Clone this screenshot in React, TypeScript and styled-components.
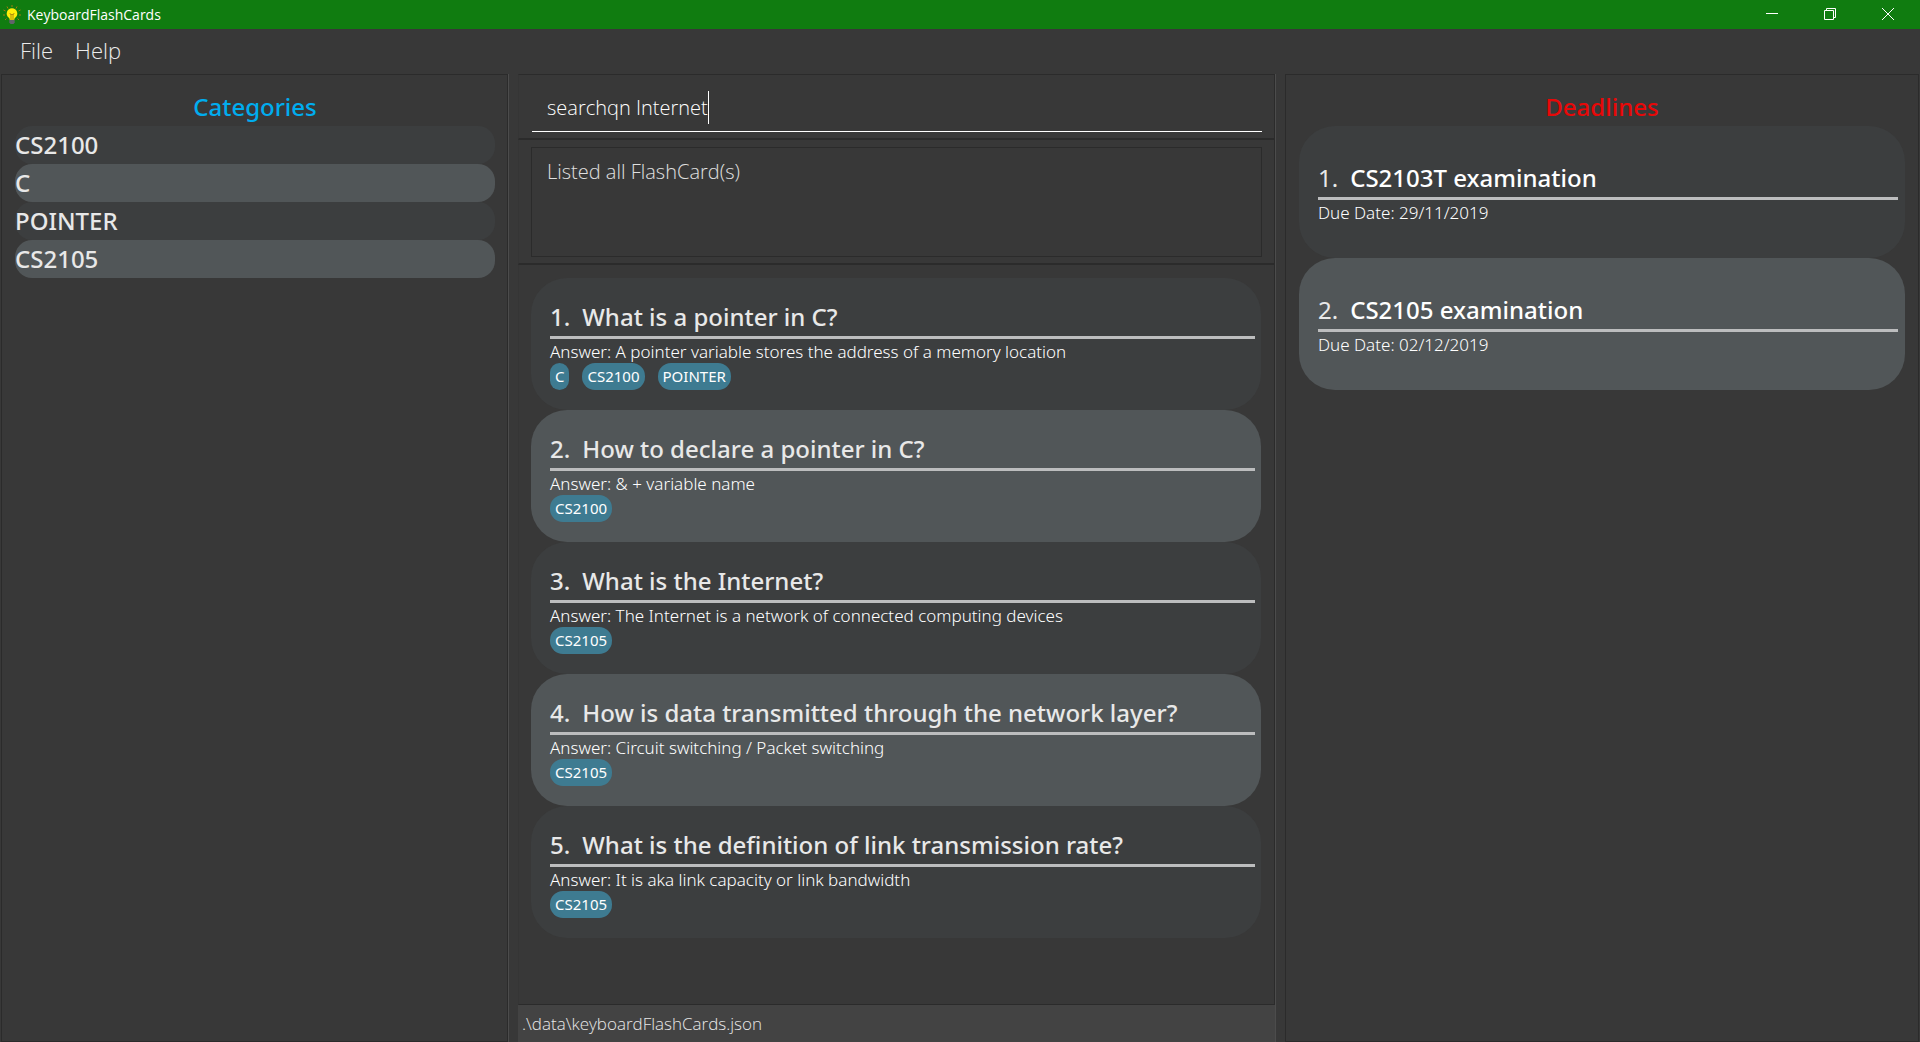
import React from "react";
import styled, { createGlobalStyle } from "styled-components";

const GlobalStyle = createGlobalStyle`
  *, *::before, *::after { box-sizing: border-box; }
  html, body, #root { height: 100%; margin: 0; }
  body {
    background: #383838;
    color: #e8e8e8;
    font-family: "Open Sans", "Noto Sans", sans-serif;
    overflow: hidden;
  }
  h1, h2, h3, p, ul, ol { margin: 0; padding: 0; font-weight: inherit; }
  ul, ol { list-style: none; }
`;

const Window = styled.div`
  display: flex;
  flex-direction: column;
  height: 100%;
`;

const TitleBar = styled.header`
  display: flex;
  flex: none;
  height: 29px;
  padding: 0 3px;
  background: #107c10;
  color: #fff;
`;

const AppName = styled.h1`
  display: flex;
  align-items: center;
  gap: 6px;
  flex: 1;
  font-size: 14px;
  line-height: 28px;
`;

const WindowButton = styled.button`
  display: grid;
  place-items: center;
  width: 58px;
  height: 28px;
  padding: 0;
  border: 0;
  background: none;
  color: #fff;
`;

const MenuBar = styled.nav`
  display: flex;
  flex: none;
  height: 45px;
  padding: 4px 9px;
`;

const MenuButton = styled.button`
  height: 34px;
  padding: 0 11px;
  border: 0;
  background: none;
  color: #ececec;
  font: 300 22px/32px "Open Sans", "Noto Sans", sans-serif;
`;

const Panes = styled.main`
  display: grid;
  grid-template-columns: minmax(0, 508fr) minmax(0, 757fr) minmax(0, 635fr);
  column-gap: 10px;
  flex: 1;
  min-height: 0;
`;

const SidePane = styled.section<{ $edge: "left" | "right" }>`
  padding: 13px;
  border: 1px solid #2b2b2b;
  ${({ $edge }) =>
    $edge === "left"
      ? "margin-left: 1px; padding-right: 12px; box-shadow: 1px 0 #4c4c4c;"
      : "margin-right: 1px;"}
`;

const PaneHeading = styled.h2<{ $color: string }>`
  color: ${({ $color }) => $color};
  font-family: "Noto Sans", "Open Sans", sans-serif;
  font-size: 24px;
  font-weight: 500;
  line-height: 38px;
  text-align: center;
`;

const Category = styled.li`
  height: 38px;
  border-radius: 17px;
  background: #3c3e3f;
  font-family: "Noto Sans", "Open Sans", sans-serif;
  font-size: 24px;
  font-weight: 500;
  line-height: 38px;

  &:nth-child(even) { background: #515658; }
`;

const CenterPane = styled.section`
  display: flex;
  flex-direction: column;
  min-height: 0;
  box-shadow: 1px 0 #4c4c4c;
`;

const Framed = styled.div`
  border-right: 1px solid #2b2b2b;
  border-left: 1px solid #353535;
`;

const CommandArea = styled(Framed)`
  padding: 11px 12px 6px 13px;
  border-top: 1px solid #2b2b2b;
  border-bottom: 2px solid #2b2b2b;
`;

const CommandField = styled.div`
  display: flex;
  align-items: center;
  height: 46px;
  padding: 0 15px 2px;
  border-bottom: 1px solid #fff;
`;

const CommandInput = styled.input`
  field-sizing: content;
  min-width: 0;
  padding: 0;
  border: 0;
  outline: 0;
  background: none;
  color: #fff;
  caret-color: transparent;
  font: 300 20px/32px "Open Sans", "Noto Sans", sans-serif;
`;

const Caret = styled.span`
  width: 1px;
  height: 33px;
  background: #fff;
`;

const ResultArea = styled(Framed)`
  padding: 7px 12px 6px;
  border-bottom: 2px solid #2b2b2b;
`;

const ResultBox = styled.output`
  display: block;
  height: 110px;
  padding: 8px 15px;
  border: 1px solid #2b2b2b;
  color: #e0e0e0;
  font-size: 20px;
  font-weight: 300;
  line-height: 32px;
`;

const CardArea = styled(Framed)`
  flex: 1;
  min-height: 0;
  padding: 13px 13px 13px 12px;
  border-bottom: 1px solid #2b2b2b;
`;

const Card = styled.li<{ $low?: boolean }>`
  height: 132px;
  padding: ${({ $low }) => ($low ? "35px 7px" : "22px 6px")} 0 19px;
  border-radius: 36px;
  background: #3c3e3f;

  &:nth-child(even) { background: #515658; }
`;

const CardTitle = styled.h3<{ $bright?: boolean }>`
  display: flex;
  gap: 12px;
  padding-bottom: 3px;
  border-bottom: 3px solid #bcbdbe;
  color: ${({ $bright }) => ($bright ? "#fff" : "#e8e8e8")};
  font-family: "Noto Sans", "Open Sans", sans-serif;
  font-size: 24px;
  font-weight: 500;
  line-height: 33px;
`;

const DeadlineNumber = styled.span`
  color: #e8e8e8;
  font-weight: 400;
`;

const CardText = styled.p`
  padding-top: 2px;
  color: #fff;
  font-family: "Noto Sans", "Open Sans", sans-serif;
  font-size: 17px;
  font-weight: 300;
  line-height: 22px;
`;

const Tags = styled.ul`
  display: flex;
  gap: 13px;
`;

const Tag = styled.li`
  padding: 0 5px;
  border-radius: 13px;
  background: #3e7b91;
  color: #fff;
  font-family: "Noto Sans", "Open Sans", sans-serif;
  font-size: 15px;
  font-weight: 400;
  line-height: 27px;
`;

const StatusBar = styled.footer`
  flex: none;
  height: 37px;
  padding: 0 4px;
  background: #434343;
  color: #e8e8e8;
  font-size: 17px;
  font-weight: 300;
  line-height: 37px;
`;

const BulbIcon = () => (
  <svg width="18" height="20" viewBox="0 0 18 20" aria-hidden="true">
    <g stroke="#a07c10" strokeWidth="1">
      <path d="M9 0v2M4 1.500l1 2M14 1.500l-1 2M.5 5l2 1M17.500 5l-2 1M0 10h2M18 10h-2M2 15l1.500-1.500M16 15l-1.500-1.500" />
    </g>
    <path d="M9 3.200a5.300 5.300 0 0 0-3.200 9.500c.7.600.9 1.300.9 2.300h4.600c0-1 .2-1.700.9-2.300A5.300 5.300 0 0 0 9 3.200z" fill="#ffee0a" />
    <path d="M6.800 8l1.200 2 1-1 1 1 1.200-2M8 10v5M10 10v5" fill="none" stroke="#a88410" strokeWidth=".9" />
    <path d="M6.300 15h5.400v2.500l-1.200 1.500h-3l-1.200-1.500z" fill="#62646a" />
  </svg>
);

const categories = ["CS2100", "C", "POINTER", "CS2105"];

const flashCards = [
  { question: "What is a pointer in C?", answer: "A pointer variable stores the address of a memory location", tags: ["C", "CS2100", "POINTER"] },
  { question: "How to declare a pointer in C?", answer: "& + variable name", tags: ["CS2100"] },
  { question: "What is the Internet?", answer: "The Internet is a network of connected computing devices", tags: ["CS2105"] },
  { question: "How is data transmitted through the network layer?", answer: "Circuit switching / Packet switching", tags: ["CS2105"] },
  { question: "What is the definition of link transmission rate?", answer: "It is aka link capacity or link bandwidth", tags: ["CS2105"] },
];

const deadlines = [
  { name: "CS2103T examination", due: "29/11/2019" },
  { name: "CS2105 examination", due: "02/12/2019" },
];

export default function App() {
  const [command, setCommand] = React.useState("searchqn Internet");

  return (
    <>
      <GlobalStyle />
      <Window>
        <TitleBar>
          <AppName>
            <BulbIcon />
            KeyboardFlashCards
          </AppName>
          <WindowButton aria-label="Minimize">
            <svg width="12" height="12" viewBox="0 0 12 12" stroke="currentColor">
              <path d="M0 5.500h12" />
            </svg>
          </WindowButton>
          <WindowButton aria-label="Restore">
            <svg width="12" height="12" viewBox="0 0 12 12" fill="none" stroke="currentColor">
              <path d="M.5 2.500h9v9h-9zM2.500 2.500v-2h9v9h-2" />
            </svg>
          </WindowButton>
          <WindowButton aria-label="Close">
            <svg width="12" height="12" viewBox="0 0 12 12" stroke="currentColor">
              <path d="M0 0l12 12M12 0L0 12" />
            </svg>
          </WindowButton>
        </TitleBar>
        <MenuBar>
          <MenuButton>File</MenuButton>
          <MenuButton>Help</MenuButton>
        </MenuBar>
        <Panes>
          <SidePane $edge="left">
            <PaneHeading $color="#00adef">Categories</PaneHeading>
            <ul>
              {categories.map((name) => (
                <Category key={name}>{name}</Category>
              ))}
            </ul>
          </SidePane>
          <CenterPane>
            <CommandArea>
              <CommandField>
                <CommandInput
                  aria-label="Command"
                  value={command}
                  onChange={(event) => setCommand(event.target.value)}
                />
                <Caret />
              </CommandField>
            </CommandArea>
            <ResultArea>
              <ResultBox>Listed all FlashCard(s)</ResultBox>
            </ResultArea>
            <CardArea>
              <ol>
                {flashCards.map((card, index) => (
                  <Card key={card.question}>
                    <CardTitle>
                      <span>{index + 1}.</span>
                      <span>{card.question}</span>
                    </CardTitle>
                    <CardText>Answer: {card.answer}</CardText>
                    <Tags>
                      {card.tags.map((tag) => (
                        <Tag key={tag}>{tag}</Tag>
                      ))}
                    </Tags>
                  </Card>
                ))}
              </ol>
            </CardArea>
            <StatusBar>.\data\keyboardFlashCards.json</StatusBar>
          </CenterPane>
          <SidePane $edge="right">
            <PaneHeading $color="#e80808">Deadlines</PaneHeading>
            <ol>
              {deadlines.map((deadline, index) => (
                <Card key={deadline.name} $low>
                  <CardTitle $bright>
                    <DeadlineNumber>{index + 1}.</DeadlineNumber>
                    <span>{deadline.name}</span>
                  </CardTitle>
                  <CardText>Due Date: {deadline.due}</CardText>
                </Card>
              ))}
            </ol>
          </SidePane>
        </Panes>
      </Window>
    </>
  );
}
